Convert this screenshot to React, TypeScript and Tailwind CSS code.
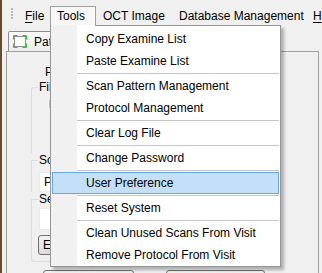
import React from "react";

function MenuItem({ label, active }: { label: string; active?: boolean }) {
  return (
    <div
      className={
        active
          ? "h-[22px] flex items-center pl-[33px] border border-[#66a7e8] bg-[#c4e0f9] whitespace-nowrap"
          : "h-[22px] flex items-center pl-[34px] whitespace-nowrap"
      }
    >
      {label}
    </div>
  );
}

function Sep() {
  return (
    <div className="h-[3px] flex items-center pl-[25px]">
      <div className="h-[1px] flex-1 bg-[#c6c6c6]" />
    </div>
  );
}

function GroupHeader({ label, first }: { label: string; first?: boolean }) {
  return (
    <div className="flex h-[14px]">
      <div
        className={
          first
            ? "w-[7px] h-[7px] self-end border-t border-l border-[#d5dfe5] rounded-tl-[3px]"
            : "w-[7px] h-[7px] self-end border-t border-l border-[#d5dfe5]"
        }
      />
      <span className="px-[1px] leading-[14px]">{label}</span>
      <div className="flex-1 h-[7px] self-end border-t border-[#d5dfe5]" />
    </div>
  );
}

export default function App() {
  return (
    <div className="relative w-[322px] h-[273px] overflow-hidden bg-[#f0f0f0] border-l-2 border-[#6b4a2b] text-[12px] leading-[14px] text-black font-['Liberation_Sans',Arial,sans-serif]">
      {/* Menu bar */}
      <div className="flex h-[25px] items-end">
        <div className="ml-[9px] self-start mt-[8px] flex flex-col gap-[1px] w-[2px]">
          <div className="w-[2px] h-[2px] bg-[#b8b8b8]" />
          <div className="w-[2px] h-[2px] bg-[#b8b8b8]" />
          <div className="w-[2px] h-[2px] bg-[#b8b8b8]" />
          <div className="w-[2px] h-[2px] bg-[#b8b8b8]" />
        </div>
        <div className="ml-[6px] w-[31px] h-[19px] pl-[6px] flex items-center">
          <span>
            <span className="underline underline-offset-[2px]">F</span>ile
          </span>
        </div>
        <div className="w-[46px] h-[19px] pl-[6px] flex items-center border-l border-t border-r border-[#a0a0a0] bg-[#f7f7f7]">
          Tools
        </div>
        <div className="w-[76px] h-[19px] pl-[7px] flex items-center whitespace-nowrap">
          OCT Image
        </div>
        <div className="w-[134px] h-[19px] pl-[7px] flex items-center whitespace-nowrap">
          Database Management
        </div>
        <div className="h-[19px] pl-[7px] flex items-center whitespace-nowrap">
          <span className="underline underline-offset-[2px]">H</span>
        </div>
      </div>

      {/* Tab strip */}
      <div className="h-[26px] flex items-end pl-[6px]">
        <div className="w-[80px] h-[20px] flex items-center pl-[4px] gap-[7px] border-l border-t border-r border-[#898c95] rounded-t-[2px] bg-[linear-gradient(#fbfbfb,#ececec)]">
          <svg width="14" height="13" viewBox="0 0 14 13">
            <rect x="1.5" y="1.5" width="11" height="10" fill="#fff" stroke="#909090" />
            <path d="M0.5 4.5V0.5H4.5M9.5 0.5H13.5V4.5M13.5 8.5V12.5H9.5M4.5 12.5H0.5V8.5" fill="none" stroke="#1fd41f" strokeWidth="1" />
          </svg>
          <span>Pat</span>
        </div>
      </div>

      {/* Panel */}
      <div className="ml-[4px] w-[313px] h-[230px] border-t border-l border-r border-[#a0a0a0] pl-[24px] pt-[13px]">
        <div className="h-[14px] pl-[14px]">P</div>
        <div className="mt-[1px] w-[150px]">
          <GroupHeader label="Fil" first />
          <div className="h-[59px] border-l border-[#d5dfe5] pt-[6px] pl-[17px]">
            <div className="w-[1px] h-[8px] bg-[#e6bd7e]" />
          </div>
          <GroupHeader label="So" />
          <div className="border-l border-[#d5dfe5] pt-[5px] pl-[7px]">
            <div className="w-[120px] h-[20px] bg-white border border-[#e6ebf0] pl-[4px] flex items-center">
              P
            </div>
          </div>
          <GroupHeader label="Se" />
          <div className="border-l border-b border-[#d5dfe5] rounded-bl-[3px] pt-[2px] pl-[7px] pb-[6px]">
            <div className="w-[120px] h-[22px] bg-white border border-[#e6ebf0]" />
            <div className="mt-[5px] -ml-[1px] w-[100px] h-[20px] border border-[#707070] rounded-[3px] bg-[linear-gradient(#f2f2f2,#dcdcdc)] pl-[4px] flex items-center">
              El
            </div>
          </div>
        </div>
        <div className="mt-[8px] flex gap-[32px] pl-[12px]">
          <div className="w-[91px] h-[12px] border border-[#707070] rounded-[3px] bg-[linear-gradient(#f2f2f2,#e6e6e6)]" />
          <div className="w-[99px] h-[12px] border border-[#707070] rounded-[3px] bg-[linear-gradient(#f2f2f2,#e6e6e6)]" />
        </div>
      </div>

      {/* Dropdown menu */}
      <div className="absolute left-[48px] top-[25px] w-[231px] border-l border-r border-b border-[#979797] bg-[linear-gradient(to_right,#f1f1f1_0,#f1f1f1_26px,#ffffff_26px)] shadow-[3px_3px_3px_rgba(0,0,0,0.28)]">
        <div className="flex h-[1px]">
          <div className="w-[44px]" />
          <div className="flex-1 bg-[#979797]" />
        </div>
        <div className="px-[1px] pt-[2px]">
          <MenuItem label="Copy Examine List" />
          <MenuItem label="Paste Examine List" />
          <Sep />
          <MenuItem label="Scan Pattern Management" />
          <MenuItem label="Protocol Management" />
          <Sep />
          <MenuItem label="Clear Log File" />
          <Sep />
          <MenuItem label="Change Password" />
          <Sep />
          <MenuItem label="User Preference" active />
          <Sep />
          <MenuItem label="Reset System" />
          <Sep />
          <MenuItem label="Clean Unused Scans From Visit" />
          <MenuItem label="Remove Protocol From Visit" />
        </div>
      </div>
    </div>
  );
}
